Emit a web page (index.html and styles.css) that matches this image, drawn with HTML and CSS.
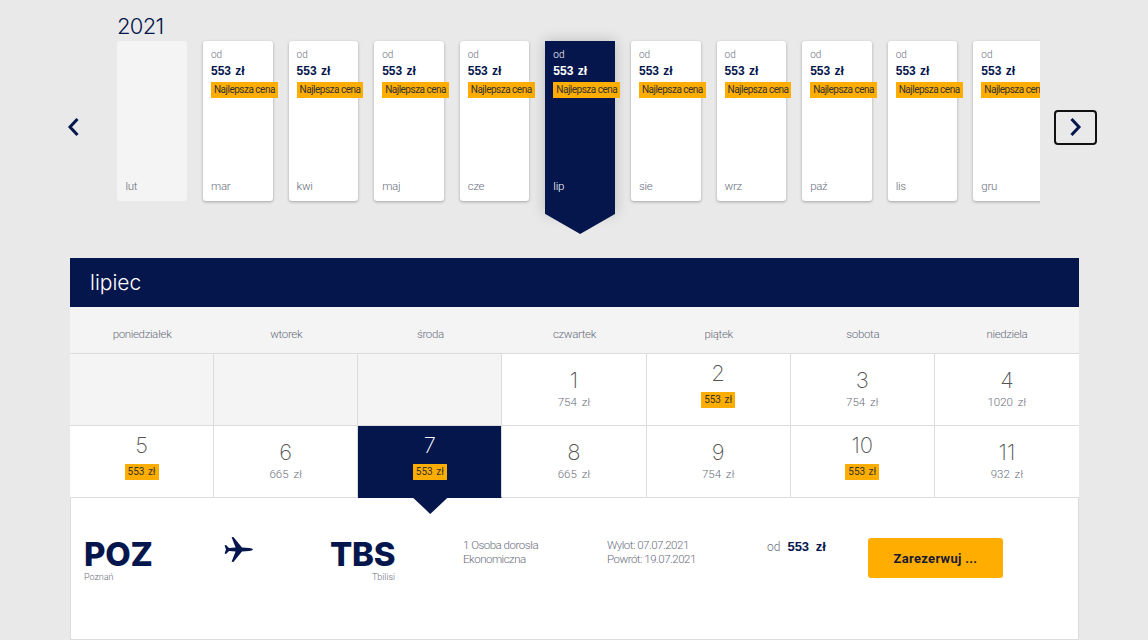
FILE: index.html
```html
<!DOCTYPE html>
<html lang="pl">
<head>
  <meta charset="UTF-8" />
  <title>Najlepsza cena</title>
  <link rel="stylesheet" href="styles.css">
</head>
<body>

  <div class="months">
    <button class="arrow arrow-prev" aria-label="prev">
      <svg width="13" height="20" viewBox="0 0 13 20"><path d="M10.5 2 L3 10 L10.5 18" fill="none" stroke="#05164d" stroke-width="3"/></svg>
    </button>

    <div class="strip">
      <div class="year">2021</div>
      <div class="cards">
        <div class="card card-off"><span class="card-name">lut</span></div>
        <div class="card"><span class="od">od</span><b class="amount">553 zł</b><span class="best">Najlepsza cena</span><span class="card-name">mar</span></div>
        <div class="card"><span class="od">od</span><b class="amount">553 zł</b><span class="best">Najlepsza cena</span><span class="card-name">kwi</span></div>
        <div class="card"><span class="od">od</span><b class="amount">553 zł</b><span class="best">Najlepsza cena</span><span class="card-name">maj</span></div>
        <div class="card"><span class="od">od</span><b class="amount">553 zł</b><span class="best">Najlepsza cena</span><span class="card-name">cze</span></div>
        <div class="card card-active"><span class="od">od</span><b class="amount">553 zł</b><span class="best">Najlepsza cena</span><span class="card-name">lip</span></div>
        <div class="card"><span class="od">od</span><b class="amount">553 zł</b><span class="best">Najlepsza cena</span><span class="card-name">sie</span></div>
        <div class="card"><span class="od">od</span><b class="amount">553 zł</b><span class="best">Najlepsza cena</span><span class="card-name">wrz</span></div>
        <div class="card"><span class="od">od</span><b class="amount">553 zł</b><span class="best">Najlepsza cena</span><span class="card-name">paź</span></div>
        <div class="card"><span class="od">od</span><b class="amount">553 zł</b><span class="best">Najlepsza cena</span><span class="card-name">lis</span></div>
        <div class="card"><span class="od">od</span><b class="amount">553 zł</b><span class="best">Najlepsza cena</span><span class="card-name">gru</span></div>
      </div>
    </div>

    <button class="arrow arrow-next" aria-label="next">
      <svg width="13" height="20" viewBox="0 0 13 20"><path d="M2.5 2 L10 10 L2.5 18" fill="none" stroke="#05164d" stroke-width="3"/></svg>
    </button>
  </div>

  <div class="calendar">
    <div class="cal-title">lipiec</div>

    <div class="weekdays">
      <div>poniedziałek</div>
      <div>wtorek</div>
      <div>środa</div>
      <div>czwartek</div>
      <div>piątek</div>
      <div>sobota</div>
      <div>niedziela</div>
    </div>

    <div class="days">
      <div class="day day-empty"></div>
      <div class="day day-empty"></div>
      <div class="day day-empty"></div>
      <div class="day"><span class="num">1</span><span class="price">754 zł</span></div>
      <div class="day day-best"><span class="num">2</span><span class="price">553 zł</span></div>
      <div class="day"><span class="num">3</span><span class="price">754 zł</span></div>
      <div class="day"><span class="num">4</span><span class="price">1020 zł</span></div>
      <div class="day day-best"><span class="num">5</span><span class="price">553 zł</span></div>
      <div class="day"><span class="num">6</span><span class="price">665 zł</span></div>
      <div class="day day-best day-active"><span class="num">7</span><span class="price">553 zł</span></div>
      <div class="day"><span class="num">8</span><span class="price">665 zł</span></div>
      <div class="day"><span class="num">9</span><span class="price">754 zł</span></div>
      <div class="day day-best"><span class="num">10</span><span class="price">553 zł</span></div>
      <div class="day"><span class="num">11</span><span class="price">932 zł</span></div>
    </div>

    <div class="offer">
      <div class="route">
        <div>
          <div class="code">POZ</div>
          <div class="city">Poznań</div>
        </div>
        <svg class="plane" width="29" height="25" viewBox="0 0 29 25">
          <path fill="#05164d" d="M29 12.5 C28.5 11.6 27 11.2 25 11.1 L18 10.6 L9.4 0 L7.6 0.3 L11.6 10.6 L5 10.9 L2 8 L0.6 8.4 L2 12.5 L0.6 16.6 L2 17 L5 14.1 L11.6 14.4 L7.6 24.7 L9.4 25 L18 14.4 L25 13.9 C27 13.8 28.5 13.4 29 12.5 Z"/>
        </svg>
        <div class="route-end">
          <div class="code">TBS</div>
          <div class="city">Tbilisi</div>
        </div>
      </div>

      <div class="info info-pax">
        <div>1 Osoba dorosła</div>
        <div>Ekonomiczna</div>
      </div>

      <div class="info info-dates">
        <div>Wylot: 07.07.2021</div>
        <div>Powrót: 19.07.2021</div>
      </div>

      <div class="total"><span class="total-od">od</span><b>553 zł</b></div>

      <button class="book">Zarezerwuj ...</button>
    </div>
  </div>

</body>
</html>
```

FILE: styles.css
```css
:root {
  --navy: #05164d;
  --amber: #ffad00;
  --bg: #e9e9e9;
  --pale: #f4f4f4;
  --line: #dcdcdc;
  --muted: #6a6e7c;
}

* { box-sizing: border-box; }

html, body { height: 640px; overflow: hidden; }

body {
  margin: 0;
  background: var(--bg);
  font-family: Roboto, sans-serif;
  font-weight: 300;
  color: var(--muted);
}

/* month carousel */
.months {
  display: flex;
  align-items: flex-start;
  height: 258px;
  padding-left: 60px;
}

.arrow {
  display: flex;
  align-items: center;
  justify-content: center;
  background: none;
  border: 2px solid transparent;
  border-radius: 4px;
  padding: 0;
  margin-top: 110px;
  height: 35px;
  cursor: pointer;
}

.arrow svg { margin-top: -2px; }

.arrow-prev {
  width: 27px;
  margin-right: 30px;
}

.arrow-next {
  width: 43px;
  margin-left: 14px;
  border-color: #111;
}

.strip {
  width: 923px;
  height: 250px;
  overflow: hidden;
}

.year {
  height: 41px;
  padding-top: 13px;
  font-family: Inter, sans-serif;
  font-size: 22px;
  font-weight: 300;
  line-height: 26px;
  letter-spacing: -0.7px;
  color: var(--navy);
}

.cards {
  display: flex;
  gap: 16px;
  padding-left: 0.4px;
}

.card {
  position: relative;
  flex: 0 0 69.6px;
  min-width: 0;
  height: 160px;
  display: flex;
  flex-direction: column;
  align-items: flex-start;
  padding: 8px 0 0 8px;
  background: #fff;
  border-radius: 3px;
  box-shadow: 0 1px 3px rgba(0,0,0,0.3);
}

.card-off {
  background: var(--pale);
  box-shadow: none;
}

.card-active {
  background: var(--navy);
  border-radius: 0;
  height: 173px;
  box-shadow: 0 0 14px rgba(0,0,0,0.2);
  color: #fff;
}

.card-active::after {
  content: "";
  position: absolute;
  left: 0;
  right: 0;
  top: 173px;
  height: 20px;
  background: var(--navy);
  clip-path: polygon(0 0, 100% 0, 50% 100%);
}

.od {
  font-size: 10px;
  line-height: 12px;
}

.amount {
  margin-top: 3px;
  font-family: "Liberation Sans", sans-serif;
  font-size: 12px;
  font-weight: 700;
  line-height: 15px;
  word-spacing: 1px;
  color: var(--navy);
}

.card-active .amount { color: #fff; }

.best {
  flex: none;
  margin-top: 3px;
  padding: 0 3px;
  background: var(--amber);
  font-size: 10px;
  font-weight: 400;
  line-height: 16px;
  letter-spacing: -0.5px;
  white-space: nowrap;
  color: #333;
}

.card-name {
  position: absolute;
  left: 8px;
  top: 138px;
  font-size: 11.5px;
  line-height: 14px;
  letter-spacing: -0.3px;
}

/* calendar */
.calendar {
  width: 1009px;
  margin-left: 70px;
}

.cal-title {
  height: 49px;
  padding-left: 20px;
  background: var(--navy);
  font-family: Inter, sans-serif;
  font-size: 21px;
  font-weight: 300;
  line-height: 50px;
  color: #fff;
}

.weekdays {
  display: grid;
  grid-template-columns: repeat(7, 1fr);
  height: 47px;
  padding-top: 8px;
  background: var(--pale);
  border-bottom: 1px solid var(--line);
  font-size: 11.5px;
  line-height: 38px;
  letter-spacing: -0.35px;
  text-align: center;
}

.days {
  display: grid;
  grid-template-columns: repeat(7, 1fr);
  grid-auto-rows: 72px;
}

.day {
  position: relative;
  display: flex;
  flex-direction: column;
  align-items: center;
  padding-top: 11px;
  background: #fff;
  border-right: 1px solid var(--line);
  border-bottom: 1px solid var(--line);
}

.day:nth-child(7n) { border-right: 0; }

.day-empty { background: var(--pale); }

.num {
  font-family: Inter, sans-serif;
  font-size: 22px;
  font-weight: 200;
  line-height: 30px;
  color: #555;
}

.price {
  font-size: 11.5px;
  line-height: 14px;
  word-spacing: 2px;
}

.day-best { padding-top: 4px; }

.day-best .price {
  margin-top: 4px;
  padding: 0 3px;
  background: var(--amber);
  font-size: 10px;
  font-weight: 400;
  line-height: 16px;
  word-spacing: 1px;
  color: #333;
}

.day-active {
  background: var(--navy);
  border-bottom-color: var(--navy);
}

.day-active .num { color: #fff; }

.day-active::after {
  content: "";
  position: absolute;
  z-index: 1;
  left: 54px;
  top: 71px;
  width: 36px;
  height: 17px;
  background: var(--navy);
  clip-path: polygon(0 0, 100% 0, 50% 100%);
}

/* selected flight */
.offer {
  display: flex;
  align-items: flex-start;
  height: 143px;
  margin-top: -1px;
  padding: 40px 0 0 13px;
  background: #fff;
  border: 1px solid var(--line);
}

.route {
  display: grid;
  grid-template-columns: 140px 106px 65px;
}

.code {
  font-family: Inter, sans-serif;
  font-size: 33px;
  font-weight: 800;
  line-height: 32px;
  letter-spacing: -0.3px;
  color: var(--navy);
}

.city {
  margin-top: 2px;
  font-size: 9px;
  line-height: 11px;
}

.route-end { text-align: right; }

.plane { margin-top: -1px; }

.info {
  font-size: 11.5px;
  line-height: 14px;
  letter-spacing: -0.5px;
}

.info-pax {
  width: 144px;
  margin-left: 68px;
}

.info-dates { width: 160px; }

.total {
  width: 101px;
  padding-top: 1px;
  font-size: 12px;
  line-height: 16px;
}

.total-od { margin-right: 7px; }

.total b {
  font-family: "Liberation Sans", sans-serif;
  font-size: 13px;
  font-weight: 700;
  word-spacing: 3px;
  color: var(--navy);
}

.book {
  width: 135px;
  height: 40px;
  background: var(--amber);
  border: 0;
  border-radius: 3px;
  font-family: Roboto, sans-serif;
  font-size: 13px;
  font-weight: 700;
  letter-spacing: 0.3px;
  color: #1a1a2e;
  cursor: pointer;
}
```
